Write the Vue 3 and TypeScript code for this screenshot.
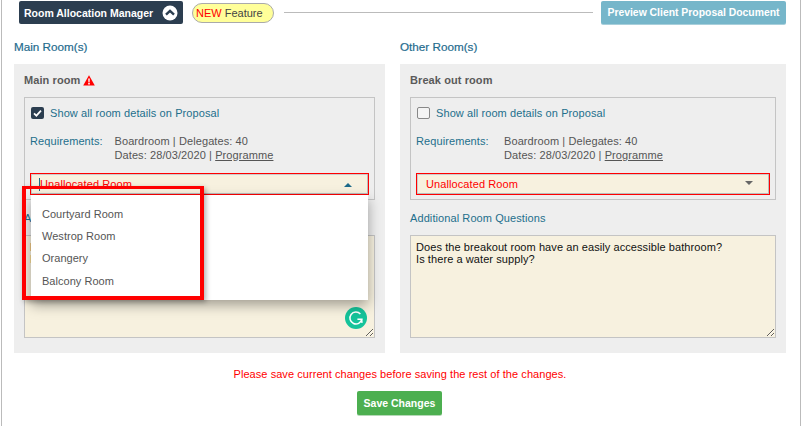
<template>
  <div class="frame">
    <header class="topbar">
      <button class="manager-btn">
        <span>Room Allocation Manager</span>
        <svg class="chevron" width="16" height="16" viewBox="0 0 16 16">
          <circle cx="8" cy="8" r="7.5" fill="#fff" />
          <path d="M4 9.6 8 5.8l4 3.8" fill="none" stroke="#2c3e50" stroke-width="2.4" />
        </svg>
      </button>
      <span class="pill"><em>NEW</em> Feature</span>
      <span class="rule"></span>
      <button class="preview-btn">Preview Client Proposal Document</button>
    </header>

    <main class="columns">
      <section v-for="col in columns" :key="col.heading" class="column">
        <h2 class="heading">{{ col.heading }}</h2>
        <div class="panel">
          <h3 class="room-name">
            {{ col.room }}
            <svg v-if="col.warning" class="warn" width="12" height="11" viewBox="0 0 12 11">
              <path d="M6 0.3 11.8 10.6H0.2z" fill="#f00" />
              <path d="M5.2 3.4h1.6l-.25 4H5.45zM5.2 8.1h1.6v1.5H5.2z" fill="#fff" />
            </svg>
          </h3>

          <div class="details">
            <label class="show-row">
              <span class="check" :class="{ on: col.checked }">
                <svg v-if="col.checked" width="13" height="12" viewBox="0 0 13 12">
                  <path d="M3 6.3 5.4 8.7 10 3.7" fill="none" stroke="#fff" stroke-width="1.7" />
                </svg>
              </span>
              Show all room details on Proposal
            </label>
            <div class="reqs" :style="{ gridTemplateColumns: col.labelWidth + 'px 1fr' }">
              <span class="req-label">Requirements:</span>
              <div class="req-value">
                Boardroom | Delegates: 40<br />
                Dates: 28/03/2020 | <u>Programme</u>
              </div>
            </div>
            <div class="select-wrap">
              <div class="select" :class="{ open: col.open }">
                <i v-if="col.open" class="caret"></i>
                <span>Unallocated Room</span>
                <b class="arrow"></b>
              </div>
              <template v-if="col.open">
                <ul class="dropdown">
                  <li v-for="name in options" :key="name">{{ name }}</li>
                </ul>
                <div class="annotation"></div>
              </template>
            </div>
          </div>

          <p class="question-label">Additional Room Questions</p>
          <div class="question-box">
            <textarea class="questions" readonly :value="questions"></textarea>
            <svg v-if="col.open" class="grammarly" width="22" height="22" viewBox="0 0 22 22">
              <circle cx="11" cy="11" r="11" fill="#15c39a" />
              <path d="M15.4 7A6 6 0 1 0 16.8 12.2H12.4" fill="none" stroke="#fff" stroke-width="1.5" />
              <path d="M17 15.8 16.6 12" fill="none" stroke="#fff" stroke-width="1.5" />
            </svg>
          </div>
        </div>
      </section>
    </main>

    <p class="save-msg">Please save current changes before saving the rest of the changes.</p>
    <div class="save-row">
      <button class="save-btn">Save Changes</button>
    </div>
  </div>
</template>

<script setup lang="ts">
const options = ['Courtyard Room', 'Westrop Room', 'Orangery', 'Balcony Room']

const questions = 'Does the breakout room have an easily accessible bathroom?\nIs there a water supply?'

const columns = [
  { heading: 'Main Room(s)', room: 'Main room', warning: true, checked: true, open: true, labelWidth: 84.5 },
  { heading: 'Other Room(s)', room: 'Break out room', warning: false, checked: false, open: false, labelWidth: 88 },
]
</script>

<style>
html,
body {
  margin: 0;
  background: #fff;
  overflow: hidden;
}
</style>

<style scoped>
.frame {
  box-sizing: border-box;
  width: 800px;
  height: 426px;
  margin-left: 1px;
  padding: 1px 14px 0 12px;
  border-left: 1px solid #bbb;
  border-right: 1px solid #bbb;
  font-family: "Liberation Sans", Arial, sans-serif;
  font-size: 11px;
  letter-spacing: 0.09px;
  color: #555;
}

.topbar {
  display: flex;
  align-items: center;
  height: 23px;
  padding-left: 5px;
}

button {
  border: 0;
  font: inherit;
  font-size: 10.5px;
  font-weight: 700;
  letter-spacing: 0;
  color: #fff;
  padding: 0;
}

.manager-btn {
  display: flex;
  align-items: center;
  justify-content: space-between;
  box-sizing: border-box;
  width: 164px;
  height: 23px;
  padding: 0 5px;
  border-radius: 2px;
  background: #2c3e50;
}

.pill {
  box-sizing: border-box;
  width: 82px;
  height: 20px;
  margin-left: 9px;
  border: 1px solid #aaa;
  border-radius: 10px;
  background: #ffff99;
  color: #444;
  font-size: 11px;
  letter-spacing: 0;
  line-height: 18px;
  padding-left: 3px;
}

.pill em {
  font-style: normal;
  color: #f00;
}

.rule {
  flex: 1;
  height: 1px;
  margin: 0 8px 0 10px;
  background: #bbb;
}

.preview-btn {
  width: 185px;
  height: 23px;
  border-radius: 2px;
  background: #76b6ca;
  box-shadow: 0 1px 0 #a8cfdb;
  font-size: 10.4px;
}

.columns {
  display: grid;
  grid-template-columns: 371px 386px;
  column-gap: 15px;
  margin-top: 16px;
}

.heading {
  margin: 0 0 10px;
  height: 14px;
  font-size: 11.7px;
  letter-spacing: 0;
  line-height: 14px;
  font-weight: 400;
  -webkit-text-stroke: 0.2px #1f6b8e;
  color: #1f6b8e;
}

.panel {
  box-sizing: border-box;
  height: 289px;
  padding: 10px 10px 0;
  background: #eee;
}

.room-name {
  display: flex;
  align-items: center;
  gap: 3px;
  height: 13px;
  margin: 0 0 10px;
  font-size: 11px;
  font-weight: 700;
  line-height: 13px;
  color: #5a5a5a;
}

.details {
  box-sizing: border-box;
  height: 103px;
  padding: 9px 5px 0;
  border: 1px solid #c4c4c4;
}

.show-row {
  display: flex;
  align-items: flex-start;
  gap: 6px;
  height: 13px;
  line-height: 12px;
  color: #236f8c;
}

.check {
  box-sizing: border-box;
  display: block;
  width: 13px;
  height: 12px;
  margin-left: 1px;
  border: 1px solid #888;
  border-radius: 2px;
  background: #f4f4f4;
}

.check.on {
  border: 0;
  background: #2c3e50;
}

.check svg {
  display: block;
}

.reqs {
  display: grid;
  margin-top: 14px;
  line-height: 14px;
}

.req-label {
  color: #236f8c;
}

.select-wrap {
  position: relative;
  margin-top: 11px;
}

.select {
  display: flex;
  align-items: center;
  box-sizing: border-box;
  height: 22px;
  padding: 0 16px 0 9px;
  border: 1px solid #f00;
  box-shadow: inset -1px -1px 0 #bbb, inset 1px 1px 0 #ccc;
  background: #f7f1df;
  color: #f00;
}

.select span {
  flex: 1;
}

.caret {
  position: absolute;
  left: 9px;
  top: 5px;
  width: 1px;
  height: 13px;
  background: #1c6a8a;
}

.arrow {
  width: 0;
  height: 0;
  border-left: 4px solid transparent;
  border-right: 4px solid transparent;
  border-top: 4px solid #666;
  margin-top: -3px;
}

.select.open .arrow {
  border-top: 0;
  border-bottom: 4px solid #1c6a8a;
  margin-top: 1px;
}

.dropdown {
  position: absolute;
  z-index: 2;
  left: 1px;
  right: 1px;
  top: 22px;
  box-sizing: border-box;
  height: 105px;
  margin: 0;
  padding: 8px 0 0 11px;
  list-style: none;
  letter-spacing: 0.03px;
  background: #fff;
  box-shadow: 0 5px 12px rgba(0, 0, 0, 0.35);
}

.dropdown li {
  height: 22px;
  line-height: 22px;
  color: #555;
}

.dropdown li:last-child {
  margin-top: 1px;
}

.annotation {
  position: absolute;
  z-index: 3;
  left: -8px;
  top: 13px;
  box-sizing: border-box;
  width: 182px;
  height: 114px;
  border: 4px solid #f00;
  border-top-width: 3px;
  box-shadow: 2px 2px 5px rgba(0, 0, 0, 0.3);
}

.question-label {
  height: 14px;
  margin: 11px 0 10px;
  line-height: 14px;
  color: #236f8c;
}

.question-box {
  position: relative;
  height: 103px;
}

.questions {
  display: block;
  box-sizing: border-box;
  width: 100%;
  height: 103px;
  padding: 5px;
  border: 1px solid #c4c4c4;
  border-radius: 0;
  outline: 0;
  background: #f7f1df;
  font: 11px/12px "Liberation Sans", Arial, sans-serif;
  letter-spacing: 0.08px;
  color: #111;
}

.grammarly {
  position: absolute;
  right: 8px;
  bottom: 9px;
}

.save-msg {
  height: 14px;
  margin: 14px 0 0;
  line-height: 14px;
  text-align: center;
  letter-spacing: 0.06px;
  color: #f00;
}

.save-row {
  display: flex;
  justify-content: center;
  margin-top: 10px;
  padding-right: 1px;
}

.save-btn {
  width: 85px;
  height: 24px;
  border-radius: 2px;
  background: #4caf50;
  box-shadow: 0 1px 0 #b5d8b7;
}
</style>
